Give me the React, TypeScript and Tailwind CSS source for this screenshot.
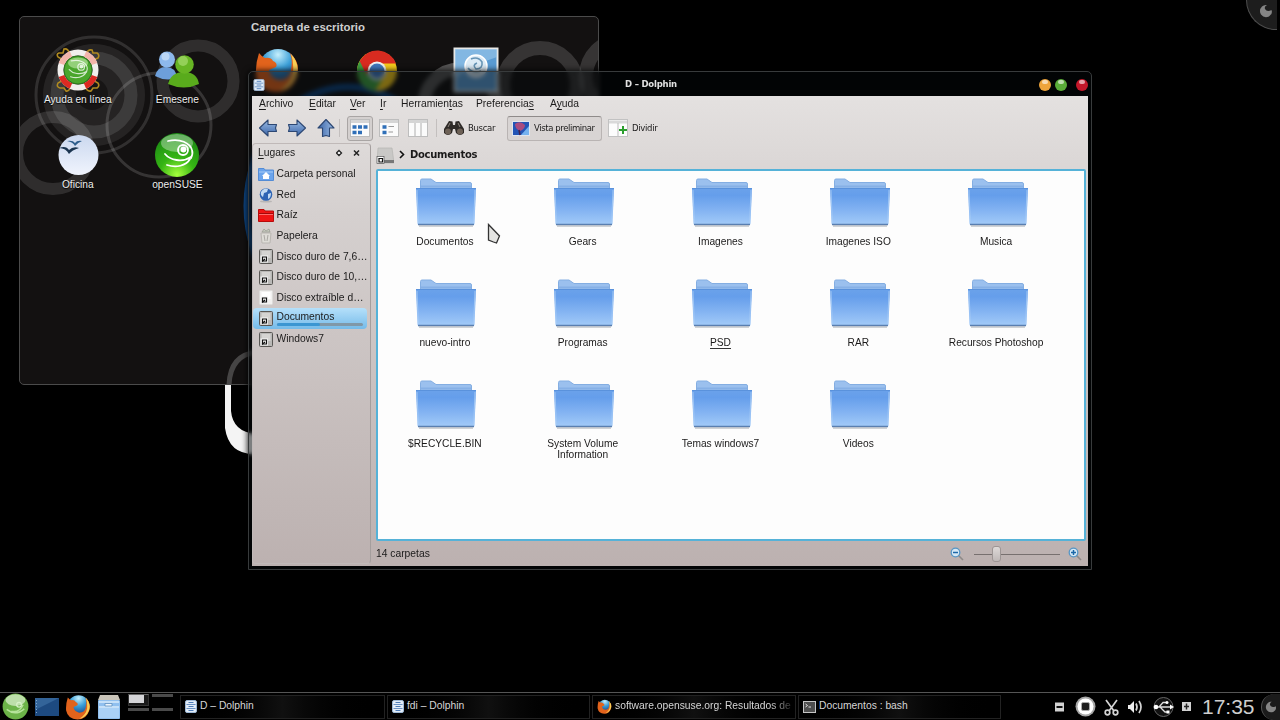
import React from "react";

const LizardMark = () => (
  <g fill="none" stroke="#fff" strokeWidth="1.8" strokeLinecap="round">
    <path d="M14 9 C26 6 36 11 38 18 C39 21 38 24 37 26" />
    <path d="M11 22 C16 28 28 31 37 25 M13 33 C22 36 32 34 36 27" />
    <circle cx="29" cy="18" r="5" />
    <circle cx="29.5" cy="17.5" r="2" fill="#fff" />
  </g>
);

const SuseIcon = ({ className }: { className: string }) => (
  <svg viewBox="0 0 46 46" className={className}>
    <defs>
      <radialGradient id="suse" cx="50%" cy="95%" r="90%">
        <stop offset="0" stopColor="#a5ff3c" />
        <stop offset=".45" stopColor="#35b414" />
        <stop offset="1" stopColor="#1c8a14" />
      </radialGradient>
    </defs>
    <circle cx="23" cy="23" r="22" fill="url(#suse)" />
    <ellipse cx="23" cy="11" rx="16" ry="9" fill="#fff" opacity=".35" />
    <LizardMark />
  </svg>
);

const MenuSuseIcon = () => (
  <svg viewBox="0 0 46 46" className="h-[27px] w-[27px] shrink-0">
    <circle cx="23" cy="23" r="22" fill="#6cb348" />
    <ellipse cx="23" cy="12" rx="17" ry="10" fill="#e9f8df" opacity=".65" />
    <path d="M8 28 Q23 40 38 27 M16 31 Q30 34 36 20" fill="none" stroke="#b5e39a" strokeWidth="2.5" />
    <circle cx="29" cy="20" r="4" fill="none" stroke="#d9f2c9" strokeWidth="2" />
  </svg>
);

const HelpIcon = () => (
  <svg viewBox="0 0 46 46" className="h-[46px] w-[46px]">
    <g fill="none" stroke="#b08a20" strokeWidth="1.6">
      <path d="M10 14 L3 10 Q1 7 4 6 L8 6 L9 2 Q13 1 15 7 M36 14 L43 11 Q45 8 42 6 L38 6 L37 3 Q33 2 31 7" />
      <path d="M10 32 L3 36 Q1 40 5 41 L9 41 L11 44 Q14 45 16 39 M36 32 L43 36 Q45 39 42 41 L38 41 L36 44 Q32 45 30 39" />
    </g>
    <circle cx="23" cy="23" r="17.500" fill="none" stroke="#f1efed" strokeWidth="6" />
    <path d="M6.500 29 A17.500 17.500 0 0 0 16 39 M30 39 A17.500 17.500 0 0 0 39.500 29" fill="none" stroke="#dc2a22" strokeWidth="6" />
    <path d="M6.500 17 A17.500 17.500 0 0 1 16 7 M30 7 A17.500 17.500 0 0 1 39.500 17" fill="none" stroke="#f3b5aa" strokeWidth="6" />
    <circle cx="23" cy="23" r="14" fill="#4aa62c" stroke="#2e7a1d" />
    <ellipse cx="23" cy="16" rx="10" ry="5.500" fill="#c4ecae" opacity=".6" />
    <g transform="translate(7 8) scale(.66)" opacity=".75">
      <LizardMark />
    </g>
  </svg>
);

const BuddiesIcon = () => (
  <svg viewBox="0 0 46 46" className="h-[46px] w-[46px]">
    <path d="M1 29 Q3 20 12 20 Q22 20 23 31 Q12 35 1 29Z" fill="#6d9fda" />
    <circle cx="13" cy="12.500" r="8" fill="#8db9ec" />
    <circle cx="11.500" cy="9.500" r="4" fill="#cfe2f8" opacity=".7" />
    <path d="M14 37 Q17 25 30 25 Q43 25 45 37 Q30 44 14 37Z" fill="#59ab1c" />
    <circle cx="30.500" cy="17.500" r="9.300" fill="#67b524" />
    <circle cx="29" cy="14" r="5" fill="#b2e37c" opacity=".6" />
  </svg>
);

const OfficeIcon = () => (
  <svg viewBox="0 0 46 46" className="h-[46px] w-[46px]">
    <defs>
      <linearGradient id="office" x1="0" y1="0" x2="0" y2="1">
        <stop offset="0" stopColor="#cbd8ef" />
        <stop offset="1" stopColor="#f0f4fd" />
      </linearGradient>
    </defs>
    <circle cx="23.500" cy="23" r="20" fill="url(#office)" />
    <path d="M4 16 Q11 13 14 18 Q18 14 24 16 Q17 18 14 22 Q11 16 4 16Z" fill="#1b3550" />
    <path d="M12 9 Q18 8 20 11 Q22 8 27 9 Q22 11 20 14 Q18 10 12 9Z" fill="#2e5e8c" />
  </svg>
);

const FirefoxIcon = ({ className }: { className: string }) => (
  <svg viewBox="0 0 46 46" className={className}>
    <defs>
      <radialGradient id="globe" cx="50%" cy="15%" r="80%">
        <stop offset="0" stopColor="#c5effc" />
        <stop offset=".45" stopColor="#3b9fd8" />
        <stop offset="1" stopColor="#153f86" />
      </radialGradient>
    </defs>
    <circle cx="24" cy="21" r="19" fill="url(#globe)" />
    <path d="M36 6 Q47 16 43 29 Q38 45 22 45 Q5 44 2 29 Q1 18 5 6 Q8 10 11 11 Q17 10 19 14 Q24 16 22 20 L15 23 Q16 31 25 33 Q36 33 37 22 Q39 14 36 6Z" fill="#e2631c" />
    <path d="M37 7 Q47 18 42 30 Q37 42 25 44 Q37 37 39 26 Q40 15 37 7Z" fill="#f9cf55" />
  </svg>
);

const ChromeIcon = () => (
  <svg viewBox="0 0 46 46" className="h-[46px] w-[46px]">
    <circle cx="23" cy="24" r="20" fill="#f4c91b" />
    <path d="M23 24 L5.700 14 A20 20 0 0 0 21 44 L31 28Z" fill="#3f9f41" />
    <path d="M23 24 L12 27 L5.700 14 A20 20 0 0 1 42 16.500 L23 16.500Z" fill="#d82b20" />
    <circle cx="23" cy="24" r="9.500" fill="#eef0ef" />
    <circle cx="23" cy="24" r="7.500" fill="#3f77bd" />
  </svg>
);

const PictureIcon = () => (
  <svg viewBox="0 0 46 46" className="h-[46px] w-[46px]">
    <rect x="1.500" y="1.500" width="43" height="43" fill="#5a9bd2" stroke="#e8e8e6" strokeWidth="2" />
    <path d="M2 2 H44 V10 Q24 16 2 32Z" fill="#9cc9ec" opacity=".6" />
    <circle cx="23" cy="19" r="11" fill="#dcebf6" stroke="#fff" strokeWidth="1.500" />
    <path d="M18 12 Q25 9 29 15 Q30 22 23 22 Q19 18 24 16 M15 21 Q20 27 28 24" fill="none" stroke="#6694b5" strokeWidth="1.600" />
  </svg>
);

const shortcuts: { label: string; icon: React.ReactNode }[] = [
  { label: "Ayuda en línea", icon: <HelpIcon /> },
  { label: "Emesene", icon: <BuddiesIcon /> },
  { label: "", icon: <FirefoxIcon className="h-[46px] w-[46px]" /> },
  { label: "", icon: <ChromeIcon /> },
  { label: "", icon: <PictureIcon /> },
  { label: "Oficina", icon: <OfficeIcon /> },
  { label: "openSUSE", icon: <SuseIcon className="h-[46px] w-[46px]" /> },
];

const DesktopFolder = () => (
  <section className="absolute left-[19px] top-[16px] h-[369px] w-[580px] overflow-hidden rounded-[5px] border border-[#4b4b4b] bg-[#131111]">
    {/* wallpaper rings */}
    <svg viewBox="20 17 578 367" className="absolute inset-0 h-full w-full">
      <g fill="none" stroke="#fff">
        <circle cx="94" cy="95" r="51" fill="#fff" fillOpacity=".08" stroke="none" />
        <circle cx="94" cy="95" r="58" strokeWidth="3" opacity=".13" />
        <circle cx="94" cy="95" r="37" strokeWidth="13" opacity=".11" />
        <circle cx="92" cy="94" r="16" fill="#131111" stroke="none" opacity=".75" />
        <circle cx="198" cy="81" r="35.500" strokeWidth="12" opacity=".12" />
        <circle cx="159" cy="125" r="52" strokeWidth="3" opacity=".15" />
        <circle cx="53" cy="153" r="36" strokeWidth="12" opacity=".12" />
        <circle cx="540" cy="85" r="37" strokeWidth="14" opacity=".15" />
        <circle cx="460" cy="105" r="36" strokeWidth="13" opacity=".28" />
        <circle cx="622" cy="76" r="36" strokeWidth="14" opacity=".15" />
        <ellipse cx="348" cy="206" rx="101" ry="119" strokeWidth="7" stroke="#0d59ac" opacity=".7" />
        <path d="M258 352 Q228 354 229 390" strokeWidth="5" opacity=".22" />
      </g>
    </svg>
    <h2 className="relative flex h-[22px] items-center justify-center pr-0.5 text-[11.400px] font-bold text-[#cfcfcf]">Carpeta de escritorio</h2>
    <div className="relative ml-[8px] mt-[8px] grid w-[498px] grid-cols-5">
      {shortcuts.map((item, i) => (
        <div key={i} className="flex h-[84.500px] flex-col items-center">
          {item.icon}
          <span className="text-[10.200px] leading-[14px] text-[#ededed] [text-shadow:0_1px_1px_#000]">{item.label}</span>
        </div>
      ))}
    </div>
  </section>
);

const CabinetIcon = ({ className }: { className: string }) => (
  <svg viewBox="0 0 12 13" className={className}>
    <rect x=".5" y=".5" width="11" height="12" rx="1.500" fill="#e3edf8" stroke="#9fb9d6" />
    <path d="M1.500 4.500 H10.500 M1.500 8.500 H10.500" stroke="#6991c3" />
    <path d="M3.500 2.500 H8.500 M3.500 6.500 H8.500 M3.500 10.500 H8.500" stroke="#4d7cb8" />
  </svg>
);

const Arrow = ({ turn }: { turn: string }) => (
  <svg viewBox="0 0 20 20" className={`h-5 w-5 ${turn}`}>
    <defs>
      <linearGradient id="arrow" x1="0" y1="0" x2="0" y2="1">
        <stop offset="0" stopColor="#9bbce4" />
        <stop offset="1" stopColor="#3a64a8" />
      </linearGradient>
    </defs>
    <path d="M1.500 10 L10 2 V6.500 H18.500 L17.500 10 L18.500 13.500 H10 V18Z" fill="url(#arrow)" stroke="#2c4773" strokeWidth="1.100" strokeLinejoin="round" />
  </svg>
);

const ViewIcon = ({ kind }: { kind: "icons" | "details" | "columns" }) => (
  <svg viewBox="0 0 20 18" className="h-[18px] w-5">
    <rect x=".5" y=".5" width="19" height="17" fill="#fbfbfb" stroke="#bdbdbd" />
    <path d="M1 2.500 H19" stroke="#d5d5d5" strokeWidth="3" />
    {kind === "icons" && <path d="M2.500 8 H6.500 M8 8 H12 M13.500 8 H17.500 M2.500 13.500 H6.500 M8 13.500 H12" stroke="#2f6fb8" strokeWidth="3.500" />}
    {kind === "details" && (
      <g>
        <path d="M3.500 8 H7.500 M3.500 13.500 H7.500" stroke="#2f6fb8" strokeWidth="3.500" />
        <path d="M9.500 7.500 H15 M9.500 13 H14" stroke="#999" />
      </g>
    )}
    {kind === "columns" && <path d="M7 4 V17 M13 4 V17" stroke="#bbb" strokeWidth="1.200" />}
  </svg>
);

const BinocularsIcon = () => (
  <svg viewBox="0 0 22 16" className="h-4 w-[22px]">
    <path d="M6 1 L9.500 1.500 L10 5 H12 L12.500 1.500 L16 1 L21 9 V13 Q17 17 13 13 L12 9 H10 L9 13 Q5 17 1 13 V9Z" fill="#2e2a27" />
    <circle cx="5" cy="11.500" r="3" fill="#6d6156" />
    <circle cx="17" cy="11.500" r="3" fill="#6d6156" />
    <path d="M7 3 L5 7 M15 3 L17 7" stroke="#8e867f" />
  </svg>
);

const PreviewIcon = () => (
  <svg viewBox="0 0 18 15" className="h-[15px] w-[18px]">
    <rect x=".5" y=".5" width="17" height="14" fill="#2355b6" stroke="#dfe5ee" />
    <path d="M9 14 L17 5 V14Z" fill="#75b2ef" />
    <path d="M3 3 Q8 -1 13 4 Q13 8 8 10 Q3 8 3 3Z" fill="#a84c80" />
    <path d="M7 9 L8 14" stroke="#43224f" strokeWidth="1.500" />
  </svg>
);

const SplitIcon = () => (
  <svg viewBox="0 0 21 18" className="h-[18px] w-[21px]">
    <rect x=".5" y=".5" width="19" height="17" fill="#fcfcfc" stroke="#c2c2c2" />
    <path d="M1 3 H19" stroke="#d9d9d9" strokeWidth="3" />
    <path d="M10 4 V17" stroke="#bbb" />
    <path d="M15 7 V15 M11 11 H19" stroke="#2b9e2d" strokeWidth="2" />
  </svg>
);

const Disk = ({ light = false }: { light?: boolean }) => (
  <svg viewBox="0 0 14 15" className="h-[15px] w-[14px]">
    <rect x=".5" y=".5" width="13" height="14" rx="1" fill={light ? "#f2f1f0" : "#b9b8b6"} stroke={light ? "#dddcda" : "#595754"} />
    <rect x="2.500" y="2" width="9" height="7" fill={light ? "#fff" : "#d5d4d2"} />
    <rect x="1.500" y="6.500" width="7.500" height="7" fill="#f5f5f5" />
    <path d="M3.500 8 H7.500 V12 H3.500Z" fill="none" stroke="#111" strokeWidth="1.200" />
    <path d="M3 12.500 L6 10" stroke="#111" strokeWidth="1.200" />
  </svg>
);

const HomeIcon = () => (
  <svg viewBox="0 0 16 13" className="h-[13px] w-4">
    <path d="M.5 .5 H6 L7 2 H15.500 V12.500 H.5Z" fill="#6ba4ec" stroke="#548cd5" />
    <path d="M1 4 H15" stroke="#a8ccf7" />
    <path d="M8 4 L12 8 H11 V11 H5 V8 H4Z" fill="#fff" />
  </svg>
);

const NetIcon = () => (
  <svg viewBox="0 0 16 16" className="h-4 w-4">
    <ellipse cx="8" cy="14.500" rx="6" ry="1" fill="#999" opacity=".5" />
    <circle cx="8" cy="7.500" r="6.300" fill="#2e64b4" />
    <path d="M3 5 Q6 0 10 2 L9 5 L6 6 L5 10 Q2 8 3 5Z M10 7 L13 6 Q13 11 10 12Z" fill="#c3dbf3" />
  </svg>
);

const RootIcon = () => (
  <svg viewBox="0 0 16 13" className="h-[13px] w-4">
    <path d="M.5 .5 H6 L7 2 H15.500 V12.500 H.5Z" fill="#f01414" stroke="#b80b0b" />
    <path d="M1 4.500 H15" stroke="#a30808" />
    <path d="M1 5.500 H15" stroke="#ff6a6a" />
  </svg>
);

const TrashIcon = () => (
  <svg viewBox="0 0 14 16" className="h-4 w-[14px]">
    <path d="M2 5 H12 L11 15 H3Z" fill="#dedcd7" stroke="#b9b6b1" />
    <path d="M3 4 L5 1 L7 3 L10 1 L11 4Z" fill="#c6cabd" stroke="#96998f" strokeWidth=".7" />
    <path d="M5 7 L6 13 M9 7 L8 13" stroke="#a9a7a2" />
  </svg>
);

const places = [
  { label: "Carpeta personal", icon: <HomeIcon /> },
  { label: "Red", icon: <NetIcon /> },
  { label: "Raíz", icon: <RootIcon /> },
  { label: "Papelera", icon: <TrashIcon /> },
  { label: "Disco duro de 7,6…", icon: <Disk /> },
  { label: "Disco duro de 10,…", icon: <Disk /> },
  { label: "Disco extraíble d…", icon: <Disk light /> },
  { label: "Documentos", icon: <Disk />, selected: true },
  { label: "Windows7", icon: <Disk /> },
];

const FolderIcon = () => (
  <svg viewBox="0 0 62 50" className="h-[50px] w-[62px]">
    <defs>
      <linearGradient id="folder" x1="0" y1="0" x2="0" y2="1">
        <stop offset="0" stopColor="#6ba2ea" />
        <stop offset=".2" stopColor="#659eeb" />
        <stop offset=".6" stopColor="#83b3f2" />
        <stop offset="1" stopColor="#a3cbf8" />
      </linearGradient>
    </defs>
    <path d="M5.500 12 V2.500 Q5.500 1 7 1 H16 L21 4.500 H55 Q56.500 4.500 56.500 6 V12Z" fill="#9bc0ee" stroke="#84aee2" />
    <path d="M6 8.500 H56" stroke="#86b0e6" strokeWidth="2" />
    <path d="M1 10 H61 L59.500 45.500 Q59.400 47 58 47 H4 Q2.600 47 2.500 45.500Z" fill="url(#folder)" />
    <path d="M1 10.500 H61" stroke="#5a92dc" />
    <path d="M2 12 L3.300 45 M60 12 L58.700 45" stroke="#a9cdf6" opacity=".8" />
    <path d="M3 46.500 H59" stroke="#5a7fb0" strokeWidth="1.500" />
    <path d="M4 48 H58" stroke="#a4a9b0" />
  </svg>
);

const folders = [
  "Documentos", "Gears", "Imagenes", "Imagenes ISO", "Musica",
  "nuevo-intro", "Programas", "PSD", "RAR", "Recursos Photoshop",
  "$RECYCLE.BIN", "System Volume Information", "Temas windows7", "Videos",
];

// label split around the accelerator letter
const menus = [
  { pre: "", key: "A", post: "rchivo", width: "w-[50px]" },
  { pre: "", key: "E", post: "ditar", width: "w-[41px]" },
  { pre: "", key: "V", post: "er", width: "w-[30px]" },
  { pre: "", key: "I", post: "r", width: "w-[21px]" },
  { pre: "Herramien", key: "t", post: "as", width: "w-[75px]" },
  { pre: "Preferencia", key: "s", post: "", width: "w-[74px]" },
  { pre: "A", key: "y", post: "uda", width: "w-[40px]" },
];

const Orb = ({ color }: { color: string }) => (
  <span className={`flex h-3 w-3 justify-center rounded-full ${color}`}>
    <span className="mt-px h-1 w-1.5 rounded-full bg-white/60" />
  </span>
);

const ZoomGlass = ({ plus = false }: { plus?: boolean }) => (
  <svg viewBox="0 0 14 14" className="h-[14px] w-[14px]">
    <path d="M8.500 8.500 L13 13" stroke="#8d8987" strokeWidth="1.600" />
    <circle cx="5.500" cy="5.500" r="4.300" fill="#d5e8f5" stroke="#5596c6" strokeWidth="1.300" />
    <path d={plus ? "M3 5.500 H8 M5.500 3 V8" : "M3 5.500 H8"} stroke="#1c68a8" strokeWidth="1.500" />
  </svg>
);

const DolphinWindow = () => (
  <section className="absolute left-[248px] top-[71px] flex h-[499px] w-[844px] flex-col rounded-t-[5px] border border-[#383b3c] bg-[#04080a]/50 px-[3px] pb-[3px] shadow-[0_0_6px_#000] backdrop-blur-[2px]">
    <header className="flex h-6 shrink-0 items-center pl-px">
      <CabinetIcon className="mt-0.5 h-3 w-3" />
      <h1 className="flex-1 pr-0.5 text-center font-['DejaVu_Sans'] text-[8.500px] font-bold tracking-[-0.2px] text-[#e2e2e2]">D – Dolphin</h1>
      <div className="mt-0.5 flex gap-1">
        <Orb color="bg-[#eea43b]" />
        <Orb color="bg-[#5aad39]" />
        <span className="w-px" />
        <Orb color="bg-[#c4172a]" />
      </div>
    </header>

    <div className="flex min-h-0 flex-1 flex-col bg-linear-to-b from-[#e4e1e0] via-[#d5d0cf] via-25% to-[#bcb1b0] text-[#1b1a1a]">
      <nav className="flex h-[17px] shrink-0 items-center pl-[7px] text-[10.300px]">
        {menus.map((m) => (
          <span key={m.key} className={`whitespace-nowrap ${m.width}`}>
            {m.pre}
            <span className="underline underline-offset-2">{m.key}</span>
            {m.post}
          </span>
        ))}
      </nav>

      <div className="flex h-[30px] shrink-0 items-center pl-1.5 text-[9px]">
        <div className="flex gap-[9px]">
          <Arrow turn="" />
          <Arrow turn="-scale-x-100" />
          <Arrow turn="rotate-90" />
        </div>
        <span className="ml-[3px] mr-[7px] h-[18px] w-px bg-[#c3bfbe]" />
        <span className="flex h-[25px] w-[26px] items-center justify-center rounded-[3px] border border-[#a9a5a4] bg-[#d4d0cf]"><ViewIcon kind="icons" /></span>
        <span className="ml-1.5"><ViewIcon kind="details" /></span>
        <span className="ml-[9px]"><ViewIcon kind="columns" /></span>
        <span className="ml-2 mr-1.5 h-[18px] w-px bg-[#c3bfbe]" />
        <BinocularsIcon />
        <span className="ml-[3px] w-[39px] font-['DejaVu_Sans'] text-[8.500px] tracking-[-0.3px]">Buscar</span>
        <span className="flex h-[25px] w-[95px] shrink-0 items-center gap-1 whitespace-nowrap rounded-[3px] border border-[#b9b4b3] border-t-[#8f8b8a] bg-[#d8d4d3] pl-1 font-['DejaVu_Sans'] text-[8.500px] tracking-[-0.4px]">
          <PreviewIcon />
          Vista preliminar
        </span>
        <span className="ml-1.5"><SplitIcon /></span>
        <span className="ml-[3px] font-['DejaVu_Sans'] text-[8.500px] tracking-[-0.3px]">Dividir</span>
      </div>

      <div className="flex min-h-0 flex-1">
        <aside className="mb-0.5 mr-[5px] w-[119px] shrink-0 rounded-sm border border-[#c0b9b8] border-r-[#a49e9d] text-[10.300px]">
          <div className="flex h-[20px] items-center pb-0.5 pl-[5px] pr-[10px] text-[10.300px]">
            <span className="flex-1"><span className="underline underline-offset-2">L</span>ugares</span>
            <svg viewBox="0 0 24 8" className="h-2 w-6">
              <path d="M3 1.500 L5.500 4 L3 6.500 L.5 4Z" fill="#fff" stroke="#222" strokeWidth="1.300" />
              <path d="M18 1.500 L23 6.500 M23 1.500 L18 6.500" stroke="#222" strokeWidth="1.500" />
            </svg>
          </div>
          {places.map((p, i) => (
            <div key={i} className={`flex h-[20.600px] items-center whitespace-nowrap pl-[5px] ${p.selected ? "mr-[3px] rounded-sm bg-linear-to-b from-[#b5e0fa] to-[#75bbe9]" : ""}`}>
              <span className="mr-[2.500px] flex w-4 shrink-0 justify-center">{p.icon}</span>
              {p.selected ? (
                <span className="flex flex-1 flex-col pr-1">
                  <span className="leading-[13px]">{p.label}</span>
                  <span className="h-[3px] rounded-full bg-[#8098a8]"><span className="block h-full w-1/2 rounded-full bg-[#3b96d2]" /></span>
                </span>
              ) : (
                <span>{p.label}</span>
              )}
            </div>
          ))}
        </aside>

        <main className="mr-0.5 flex min-w-0 flex-1 flex-col">
          <div className="flex h-[26px] shrink-0 items-center pb-[3px]">
            <svg viewBox="0 0 18 18" className="mt-[3px] h-[18px] w-[18px]">
              <path d="M2 1 H16 L18 16 H1Z" fill="#c9c8c6" stroke="#b5b4b2" strokeWidth=".7" />
              <path d="M8 14.500 H18" stroke="#777" strokeWidth="3" />
              <rect x="1" y="9.500" width="7" height="7" fill="#fff" stroke="#555" strokeWidth=".7" />
              <path d="M3 11.500 H6.500 V15 H3Z" fill="none" stroke="#111" strokeWidth="1.200" />
            </svg>
            <svg viewBox="0 0 6 9" className="ml-[5px] mr-[5px] h-[9px] w-1.5"><path d="M1 1 L4.500 4.500 L1 8" fill="none" stroke="#111" strokeWidth="1.600" /></svg>
            <span className="font-['DejaVu_Sans'] text-[10px] font-bold tracking-[-0.3px]">Documentos</span>
          </div>
          <div className="min-h-0 flex-1 rounded-[2px] border-2 border-[#55b2d8] bg-[#fdfdfd]">
            <div className="-ml-[2px] mt-[6.500px] grid w-[689px] grid-cols-5">
              {folders.map((name) => (
                <div key={name} className="flex h-[101.200px] flex-col items-center">
                  <span className="pl-[3px]"><FolderIcon /></span>
                  <span className={`mt-[8px] max-w-[98px] text-center text-[10.200px] leading-[11.500px] ${name === "PSD" ? "border-b border-[#333]" : ""}`}>{name}</span>
                </div>
              ))}
            </div>
          </div>
          <footer className="flex h-[25px] shrink-0 items-center pr-1 pt-px text-[10.300px]">
            <span className="flex-1">14 carpetas</span>
            <ZoomGlass />
            <span className="ml-2.5 mr-2 flex h-4 w-[86px] items-center">
              <span className="h-px w-[18px] bg-[#77706f]" />
              <span className="h-4 w-[9px] rounded-[3px] border border-[#9d9594] bg-linear-to-b from-[#ded9d8] to-[#bfb8b7]" />
              <span className="h-px flex-1 bg-[#77706f]" />
            </span>
            <ZoomGlass plus />
          </footer>
        </main>
      </div>
    </div>
  </section>
);

const TaskButton = ({ icon, label, width, fade = false }: { icon: React.ReactNode; label: string; width: string; fade?: boolean }) => (
  <button className={`flex h-[24px] shrink-0 items-center gap-[3px] border border-[#222] bg-linear-to-r from-black via-[#101010] to-black pl-1 text-[10.300px] text-[#d6d6d6] ${width}`}>
    {icon}
    <span className={`whitespace-nowrap ${fade ? "[mask-image:linear-gradient(to_right,#000_88%,#0003)]" : ""}`}>{label}</span>
  </button>
);

const Cashew = ({ className }: { className: string }) => (
  <svg viewBox="0 0 14 14" className={className}>
    <path d="M8 1 Q5 2.500 6 5 Q8 8.500 12.500 6 Q14 10 10 12.500 Q5 14.500 2 10.500 Q-.5 6 3 2.500 Q5 .5 8 1Z" fill="#858585" />
  </svg>
);

const Taskbar = () => (
  <footer className="absolute inset-x-0 bottom-0 flex h-[28px] items-center border-t border-[#555] bg-black pl-[2px]">
    <MenuSuseIcon />
    <svg viewBox="0 0 24 18" className="ml-[6px] h-[18px] w-6 shrink-0">
      <rect width="24" height="18" fill="#1d4a80" />
      <path d="M0 0 H24 L0 12Z" fill="#4a7db2" opacity=".5" />
      <path d="M1.500 2 V16" stroke="#7fa6cc" strokeDasharray="1 2" />
    </svg>
    <FirefoxIcon className="ml-1.5 h-[26px] w-[26px] shrink-0" />
    <svg viewBox="0 0 24 26" className="ml-1.5 h-[26px] w-6 shrink-0">
      <path d="M3 1 H21 L23 6 H1Z" fill="#c9c4b9" />
      <rect x="1" y="6" width="22" height="19" rx="1" fill="#91c0ef" />
      <path d="M2 8 H22 M2 13 H22" stroke="#d7eafc" strokeWidth="1.300" />
      <path d="M8 9.500 H15 V12 H8Z" fill="#ecf5fd" stroke="#5486b9" strokeWidth=".7" />
      <path d="M2 14 H22 V24 H2Z" fill="#b5d8f9" opacity=".7" />
    </svg>
    {/* pager */}
    <div className="ml-[7px] mr-[7px] grid w-[45px] shrink-0 grid-cols-2 gap-x-[3px] gap-y-[2px]">
      <span className="h-[12px] border border-[#333] border-t-[#666] bg-[#1a1a1a]"><span className="block h-[8px] w-[15px] bg-[#d5d5d8]" /></span>
      <span className="h-[12px] border-t-[3px] border-[#4a4a4a] bg-black" />
      <span className="h-[12px] border-t-[3px] border-[#4a4a4a] bg-black" />
      <span className="h-[12px] border-t-[3px] border-[#4a4a4a] bg-black" />
    </div>
    <div className="flex gap-[2px]">
      <TaskButton width="w-[205px]" icon={<CabinetIcon className="h-[13px] w-3 shrink-0" />} label="D – Dolphin" />
      <TaskButton width="w-[203px]" icon={<CabinetIcon className="h-[13px] w-3 shrink-0" />} label="fdi – Dolphin" />
      <TaskButton width="w-[204px]" fade icon={<FirefoxIcon className="h-[15px] w-[15px] shrink-0" />} label="software.opensuse.org: Resultados de" />
      <TaskButton
        width="w-[203px]"
        icon={
          <svg viewBox="0 0 13 12" className="h-3 w-[13px] shrink-0">
            <rect x=".5" y=".5" width="12" height="11" fill="#4e4e4e" stroke="#c5c5c5" />
            <path d="M2.500 3 L4.500 4.500 L2.500 6 M5.500 6 H8" fill="none" stroke="#ddd" />
          </svg>
        }
        label="Documentos : bash"
      />
    </div>
    <svg viewBox="0 0 150 26" className="ml-auto h-[26px] w-[150px] shrink-0">
      <rect x="5" y="8.500" width="9" height="9" fill="#d2d2d2" />
      <path d="M6.500 13 H12.500" stroke="#111" strokeWidth="2" />
      <circle cx="35.500" cy="12.500" r="10" fill="#cfcfcf" opacity=".8" />
      <circle cx="35.500" cy="12.500" r="8" fill="#fff" />
      <rect x="31.500" y="8.500" width="8" height="8" rx="1.500" fill="#1d1d1d" stroke="#aaa" />
      <g fill="none" stroke="#d5d5d5" strokeWidth="1.700">
        <path d="M56 6 L64 17 M67 6 L59 17" />
        <circle cx="57.500" cy="18.500" r="2.300" />
        <circle cx="65.500" cy="18.500" r="2.300" />
        <path d="M86 9.500 Q88 13 86 16.500 M89 7 Q93 13 89 19" />
      </g>
      <path d="M78 11 H80 L84 7 V19 L80 15 H78Z" fill="#eee" />
      <circle cx="113.500" cy="13" r="9.500" fill="#111" stroke="#666" />
      <path d="M105 13 H122 M109 13 L113 8.500 H117 M110 13 L115 18 H118" fill="none" stroke="#ddd" strokeWidth="1.300" />
      <circle cx="106" cy="13" r="2.300" fill="#fff" />
      <path d="M120 10.500 L124 13 L120 15.500Z" fill="#fff" />
      <circle cx="117" cy="8.500" r="1.500" fill="#fff" />
      <rect x="116.500" y="16.500" width="3" height="3" fill="#fff" />
      <rect x="132" y="8" width="9" height="9" fill="#d2d2d2" />
      <path d="M136.500 9.500 V15.500 M134 12.500 H139" fill="none" stroke="#222" strokeWidth="1.500" />
    </svg>
    <span className="ml-[2px] w-[57px] shrink-0 whitespace-nowrap text-[21px] leading-none text-[#cecece]">17:35</span>
    <span className="ml-[2px] flex h-[26px] w-[19px] shrink-0 items-center justify-center rounded-l-full border-l border-[#555] bg-[#1b1b1b]">
      <Cashew className="h-3 w-3" />
    </span>
  </footer>
);

export default function App() {
  return (
    <div className="relative h-[720px] w-[1280px] overflow-hidden bg-black font-['Liberation_Sans',Arial,sans-serif] leading-none">
      {/* lower part of the wallpaper logo */}
      <svg viewBox="220 385 50 75" className="absolute left-[220px] top-[385px] h-[75px] w-[50px]">
        <path d="M225 385 H231 V411 Q233 433 258 434 V454 Q229 456 225 428Z" fill="#f4f4f4" />
      </svg>
      <DesktopFolder />
      <DolphinWindow />

      {/* desktop toolbox in the corner */}
      <div className="absolute right-[3px] top-0 flex h-[30px] w-[31px] items-start justify-end rounded-bl-[30px] border-b border-l border-[#4d4d4d] bg-[#1d1d1d] pr-1 pt-1">
        <Cashew className="h-[14px] w-[14px]" />
      </div>

      {/* mouse pointer */}
      <svg viewBox="0 0 14 22" className="absolute left-[487px] top-[223px] h-[22px] w-[14px]">
        <path d="M1.500 1.500 L12.500 13 L9.500 20 L6.500 19 L1.500 17Z" fill="#e4e4e2" stroke="#333" strokeWidth="1.300" />
      </svg>
      <Taskbar />
    </div>
  );
}
